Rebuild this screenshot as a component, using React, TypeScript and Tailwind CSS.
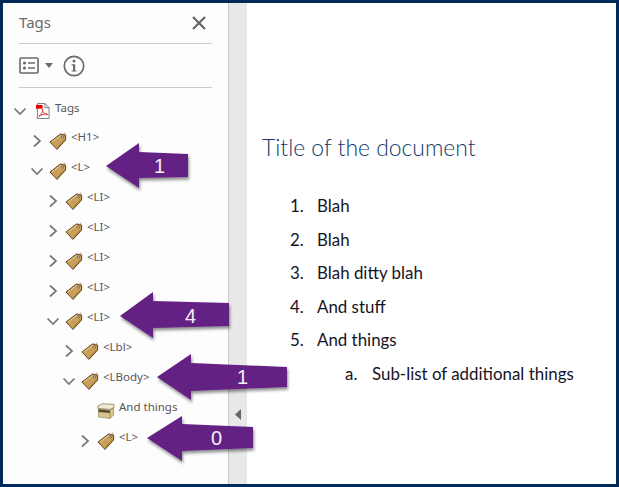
import React from "react";

const Chevron = ({ open }: { open: boolean }) => (
  <svg viewBox="0 0 14 14" className="w-[14px] h-[14px] shrink-0">
    <path d={open ? "M1.5 4.5 L7 10 L12.5 4.5" : "M4 1.5 L10 7 L4 12.5"} fill="none" stroke="#777777" strokeWidth="1.7" />
  </svg>
);

const Tag = () => (
  <svg viewBox="0 0 18 18" className="w-[18px] h-[18px] shrink-0">
    <path d="M1 10 L11.5 2 L16.6 3 L16.6 8 L8 17.4 Z" fill="#c99f5a" stroke="#5e4115" strokeWidth="1" strokeLinejoin="round" />
    <path d="M2.8 10 L11.6 3.4" fill="none" stroke="#e6cd9a" strokeWidth="1" />
    <path d="M8.2 15.6 L15.4 7.8" fill="none" stroke="#a57c3c" strokeWidth="1" />
    <circle cx="13.6" cy="5" r="1.1" fill="#f4f0e6" stroke="#5e4318" strokeWidth="0.7" />
    <path d="M13.8 4.4 C14 2.6 14.8 1 16.4 0.8" fill="none" stroke="#8a8a8a" strokeWidth="0.8" />
  </svg>
);

const Box = () => (
  <svg viewBox="0 0 18 16" className="w-[18px] h-[16px] shrink-0">
    <path d="M1.5 6 L13 7 L16.5 5 L16.5 12 L13 15.5 L1.5 14 Z" fill="#d8c48e" stroke="#8a7a50" strokeWidth="0.6" />
    <path d="M0.8 3 L5.5 0.8 L17 1.4 L17 4.4 L13 6.4 L0.8 5.4 Z" fill="#f1ead2" stroke="#77705a" strokeWidth="0.7" />
    <path d="M1.5 6.4 L13 7.4 L13 10 L1.5 9 Z" fill="#5c4c28" />
    <path d="M13 7 L13 15.5" stroke="#8a7a50" strokeWidth="0.6" />
  </svg>
);

const Pdf = () => (
  <svg viewBox="0 0 15 17" className="w-[14px] h-[16px] shrink-0">
    <path d="M1.5 0.5 L9.5 0.5 L14 5 L14 16.5 L1.5 16.5 Z" fill="#fff" stroke="#666" strokeWidth="0.9" />
    <path d="M9.5 0.5 L9.5 5 L14 5" fill="none" stroke="#666" strokeWidth="0.9" />
    <rect x="0" y="2" width="7" height="4" fill="#e00000" />
    <path d="M3 14.5 C6 12 8 8 7 6.5 C6 8 8.5 12 12.5 12 C9.5 11.5 5.5 12 3 14.5 Z" fill="none" stroke="#d81010" strokeWidth="0.9" />
  </svg>
);

const rows = [
  { pad: "pl-[27px]", chev: "closed", label: "<H1>" },
  { pad: "pl-[27px]", chev: "open", label: "<L>" },
  { pad: "pl-[43px]", chev: "closed", label: "<LI>" },
  { pad: "pl-[43px]", chev: "closed", label: "<LI>" },
  { pad: "pl-[43px]", chev: "closed", label: "<LI>" },
  { pad: "pl-[43px]", chev: "closed", label: "<LI>" },
  { pad: "pl-[43px]", chev: "open", label: "<LI>" },
  { pad: "pl-[59px]", chev: "closed", label: "<Lbl>" },
  { pad: "pl-[59px]", chev: "open", label: "<LBody>" },
  { pad: "pl-[75px]", chev: "none", label: "And things" },
  { pad: "pl-[75px]", chev: "closed", label: "<L>" },
];

const items = ["Blah", "Blah", "Blah ditty blah", "And stuff", "And things"];

export default function App() {
  return (
    <div className="relative w-[619px] h-[487px] border-[3px] border-[#002a5a] bg-white flex overflow-hidden font-['Lato',sans-serif]">
      <aside className="w-[225px] shrink-0 bg-[#fdfdfd] border-r border-[#c9c9c9] box-content">
        <div className="mx-[16px] h-[41px] border-b border-[#cccccc] flex items-center justify-between pr-[6px] pb-[1px]">
          <span className="text-[15px] text-[#6b6b6b] font-['Noto_Sans',sans-serif]">Tags</span>
          <svg viewBox="0 0 14 14" className="w-[14px] h-[14px]">
            <path d="M1 1 L13 13 M13 1 L1 13" stroke="#666" strokeWidth="2.2" fill="none" />
          </svg>
        </div>
        <div className="mx-[16px] h-[44px] border-b border-[#cccccc] flex items-center">
          <svg viewBox="0 0 20 17" className="w-[20px] h-[17px]">
            <rect x="1" y="1" width="18" height="15" rx="1" fill="none" stroke="#6a6a6a" strokeWidth="1.6" />
            <circle cx="5.5" cy="6" r="1.6" fill="#6a6a6a" />
            <circle cx="5.5" cy="11" r="1.6" fill="#6a6a6a" />
            <path d="M9 6 H16 M9 11 H16" stroke="#6a6a6a" strokeWidth="1.5" />
          </svg>
          <svg viewBox="0 0 8 5" className="w-[8px] h-[5px] ml-[6px]">
            <path d="M0 0 H8 L4 5 Z" fill="#6a6a6a" />
          </svg>
          <svg viewBox="0 0 22 22" className="w-[22px] h-[22px] ml-[10px]">
            <circle cx="11" cy="11" r="9.7" fill="none" stroke="#6a6a6a" strokeWidth="1.7" />
            <circle cx="11" cy="6.2" r="1.4" fill="#6a6a6a" />
            <path d="M8.6 9.2 H12.2 V15.4 H13.6 V16.6 H8.6 V15.4 H10 V10.4 H8.6 Z" fill="#6a6a6a" />
          </svg>
        </div>
        <div className="h-[38px] pl-[10px] pt-[12px] flex items-start">
          <div className="mt-[4px]"><Chevron open /></div>
          <div className="ml-[9px] mt-[3px]"><Pdf /></div>
          <span className="ml-[5px] text-[11.5px] leading-[15px] text-[#555] font-['Noto_Sans',sans-serif]">Tags</span>
        </div>
        {rows.map((r, i) => (
          <div key={i} className={`h-[30px] ${r.pad} flex items-center`}>
            <div className={r.chev === "none" ? "w-[14px] shrink-0" : "shrink-0"}>
              {r.chev !== "none" && <Chevron open={r.chev === "open"} />}
            </div>
            <div className="ml-[5px]">{r.chev === "none" ? <Box /> : <Tag />}</div>
            <span
              className={`${r.chev === "none" ? "ml-[4px] text-[#555]" : "ml-[4px] text-[#5a5560]"} text-[11.5px] leading-[15px] mb-[10px] whitespace-pre font-['Noto_Sans',sans-serif]`}
            >
              {r.label}
            </span>
          </div>
        ))}
      </aside>
      <div className="w-[18px] shrink-0 bg-[#e8e8e8] flex items-end pb-[64px] pl-[6px]">
        <svg viewBox="0 0 6 11" className="w-[6px] h-[11px]">
          <path d="M6 0 V11 L0 5.5 Z" fill="#666" />
        </svg>
      </div>
      <main className="flex-1 pl-[15px] pt-[129px] text-[#14141f]">
        <h1 className="text-[22.9px] leading-[30px] font-light text-[#123a6b]">Title of the document</h1>
        <ol className="mt-[34px] pl-[28px] text-[16.9px] leading-[20px] flex flex-col gap-[13.6px]">
          {items.map((t, i) => (
            <li key={i} className="flex">
              <span className="w-[27px]">{i + 1}.</span>
              <span>{t}</span>
            </li>
          ))}
          <li className="flex pl-[55px]">
            <span className="w-[27px]">a.</span>
            <span>Sub-list of additional things</span>
          </li>
        </ol>
      </main>
      <svg viewBox="0 0 619 487" className="absolute -left-[3px] -top-[3px] w-[619px] h-[487px] pointer-events-none">
        <defs>
          <filter id="sh" x="-20%" y="-20%" width="140%" height="150%">
            <feDropShadow dx="1" dy="2.5" stdDeviation="1.6" floodColor="#000" floodOpacity="0.45" />
          </filter>
        </defs>
        <g fill="#642183" filter="url(#sh)">
          <path d="M106 166 L139 143 L139 152 L188 154 L188 177 L139 178 L139 188 Z" />
          <path d="M120 316 L153 292 L153 301 L229 303 L229 326 L153 328 L153 338 Z" />
          <path d="M157 377 L191 354 L191 363 L287 367 L287 387 L191 391 L191 400 Z" />
          <path d="M147 438 L182 416 L182 424 L253 427 L253 448 L182 451 L182 461 Z" />
        </g>
      </svg>
      <span className="absolute left-[151px] top-[151px] text-[20px] leading-[24px] text-[#f4eef7] font-['Liberation_Sans',sans-serif]">1</span>
      <span className="absolute left-[182px] top-[301px] text-[20px] leading-[24px] text-[#f4eef7] font-['Liberation_Sans',sans-serif]">4</span>
      <span className="absolute left-[234px] top-[362px] text-[20px] leading-[24px] text-[#f4eef7] font-['Liberation_Sans',sans-serif]">1</span>
      <span className="absolute left-[208px] top-[423px] text-[20px] leading-[24px] text-[#f4eef7] font-['Liberation_Sans',sans-serif]">0</span>
    </div>
  );
}
